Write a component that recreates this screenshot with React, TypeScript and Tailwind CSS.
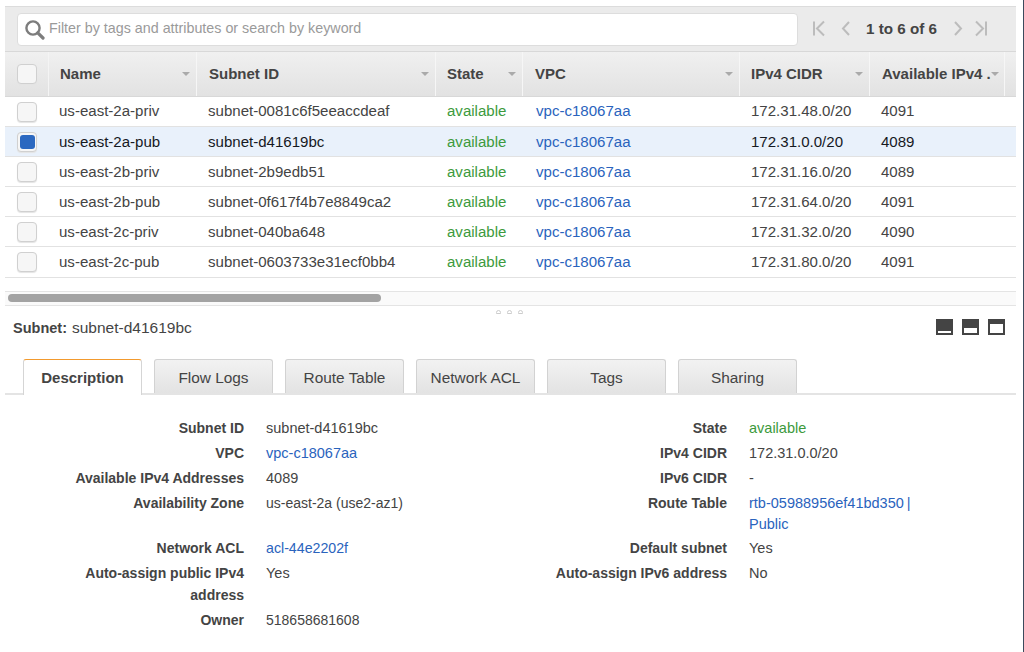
import React from "react";

const COLS = "grid grid-cols-[44px_148px_239px_87px_217px_130px_135px_11px]";
const rows = [
  ["us-east-2a-priv", "subnet-0081c6f5eeaccdeaf", "172.31.48.0/20", "4091"],
  ["us-east-2a-pub", "subnet-d41619bc", "172.31.0.0/20", "4089"],
  ["us-east-2b-priv", "subnet-2b9edb51", "172.31.16.0/20", "4089"],
  ["us-east-2b-pub", "subnet-0f617f4b7e8849ca2", "172.31.64.0/20", "4091"],
  ["us-east-2c-priv", "subnet-040ba648", "172.31.32.0/20", "4090"],
  ["us-east-2c-pub", "subnet-0603733e31ecf0bb4", "172.31.80.0/20", "4091"],
];
const headers = [
  ["Name", "pl-[11px]"],
  ["Subnet ID", "pl-[12px]"],
  ["State", "pl-[11px]"],
  ["VPC", "pl-[12px]"],
  ["IPv4 CIDR", "pl-[11px]"],
  ["Available IPv4 .", "pl-[12px]"],
];
const tabs = ["Description", "Flow Logs", "Route Table", "Network ACL", "Tags", "Sharing"];

function PagerIcon({ d, className }: { d: string; className: string }) {
  return (
    <svg width="14" height="18" viewBox="0 0 14 18" className={className} fill="none" stroke="#bcbcbc" strokeWidth="2">
      <path d={d} />
    </svg>
  );
}

function Check({ on }: { on?: boolean }) {
  return (
    <div className="flex h-[20px] w-[20px] items-center justify-center rounded-[4px] border border-[#d0d0d0] bg-[#f6f6f6] shadow-[0_1px_1px_#e4e4e4]">
      {on && <div className="h-[14px] w-[15px] rounded-[3px] bg-[#2b68c0]" />}
    </div>
  );
}

function DockIcon({ top, bottom }: { top: string; bottom: string }) {
  return (
    <div className={`flex h-[16px] w-[17px] flex-col bg-[#444] p-[2px] ${top}`}>
      <div className={`mt-auto w-full bg-white ${bottom}`} />
    </div>
  );
}

function Detail({ label, children }: { label: React.ReactNode; children: React.ReactNode }) {
  return (
    <div className="flex gap-[22px] py-[1.75px] leading-[21.5px]">
      <div className="w-[180px] shrink-0 text-right text-[14px] font-bold text-[#444]">{label}</div>
      <div className="min-w-0 flex-1 text-[#444]">{children}</div>
    </div>
  );
}

const Link = ({ children }: { children: React.ReactNode }) => <span className="text-[#2a63bd]">{children}</span>;

export default function App() {
  return (
    <div className="relative h-[652px] w-[1024px] overflow-hidden bg-white pl-[5px] pr-[8px] pt-[6px] [font-family:Liberation_Sans,Arial,sans-serif] text-[#444]">
      <div className="absolute bottom-0 right-0 top-0 w-[1px] bg-[#3b4a5c]" />

      {/* toolbar */}
      <div className="flex h-[45px] items-center border-t border-[#dcdcdc] bg-[#ebebeb] pl-[12px]">
        <div className="flex h-[33px] w-[781px] items-center rounded-[4px] border border-[#dddddd] bg-white pl-[6px]">
          <svg width="21" height="21" viewBox="0 0 21 21" fill="none" className="shrink-0">
            <circle cx="9" cy="9" r="6.6" stroke="#7d7d7d" strokeWidth="2.4" />
            <path d="M13.8 13.8 L19 19" stroke="#7d7d7d" strokeWidth="3.2" strokeLinecap="round" />
          </svg>
          <span className="ml-[4px] text-[14.3px] text-[#9a9a9a]">Filter by tags and attributes or search by keyword</span>
        </div>
        <div className="ml-[14px] flex items-center">
          <PagerIcon d="M2 1.5 V15.5 M12 1.5 L5 8.5 L12 15.5" className="" />
          <PagerIcon d="M10 2 L4 8.5 L10 15" className="ml-[13px]" />
          <span className="ml-[13px] text-[15.2px] font-bold text-[#444]">1 to 6 of 6</span>
          <PagerIcon d="M4 2 L10 8.5 L4 15" className="ml-[14px]" />
          <PagerIcon d="M2 1.5 L9 8.5 L2 15.5 M12 1.5 V15.5" className="ml-[9px]" />
        </div>
      </div>

      {/* header */}
      <div className={`${COLS} h-[46px] border-y border-[#d8d8d8] bg-gradient-to-b from-[#f0f0f0] to-[#e2e2e2]`}>
        <div className="flex items-center border-r border-[#f4f4f4] pl-[12px]">
          <Check />
        </div>
        {headers.map(([h, pad]) => (
          <div key={h} className={`flex items-center justify-between border-r border-[#f6f6f6] ${pad} pr-[6px] text-[15px] font-bold text-[#444]`}>
            <span className="whitespace-nowrap">{h}</span>
            <span className="h-0 w-0 shrink-0 border-x-[4px] border-t-[4px] border-x-transparent border-t-[#aaa]" />
          </div>
        ))}
        <div />
      </div>

      {/* rows */}
      {rows.map((r, i) => {
        const sel = i === 1;
        const c = sel ? "text-[#16191f]" : "text-[#444]";
        return (
          <div key={r[0]} className={`${COLS} h-[30.1px] items-center border-b border-[#e2e2e2] text-[15.05px] ${sel ? "bg-[#e9f1fb]" : "bg-white"}`}>
            <div className="pl-[12px]"><Check on={sel} /></div>
            <div className={`pl-[10px] pt-[0.4px] ${c}`}>{r[0]}</div>
            <div className={`pl-[11px] pt-[0.4px] ${c}`}>{r[1]}</div>
            <div className="pl-[11px] pt-[0.4px] text-[#3c9a3c]">available</div>
            <div className="pl-[13px] pt-[0.4px]"><Link>vpc-c18067aa</Link></div>
            <div className={`pl-[11px] pt-[0.4px] ${c}`}>{r[2]}</div>
            <div className={`pl-[11px] pt-[0.4px] ${c}`}>{r[3]}</div>
            <div />
          </div>
        );
      })}

      {/* scrollbar */}
      <div className="mt-[13px] flex h-[15px] items-center border-y border-[#e4e4e4] bg-[#fafafa] pl-[3px]">
        <div className="h-[8px] w-[373px] rounded-full bg-[#a3a3a3]" />
      </div>

      {/* resize handle */}
      <div className="flex h-[12px] items-center justify-center gap-[6px] pr-[3px]">
        <span className="h-[4px] w-[5px] rounded-t-full border border-[#ccc]" />
        <span className="h-[4px] w-[5px] rounded-t-full border border-[#ccc]" />
        <span className="h-[4px] w-[5px] rounded-t-full border border-[#ccc]" />
      </div>

      {/* panel title */}
      <div className="flex h-[20px] items-center justify-between pl-[8px] pr-[11px] text-[14.5px]">
        <div><span className="font-bold">Subnet:</span> <span className="ml-[1px] text-[15.5px]">subnet-d41619bc</span></div>
        <div className="-mt-[2px] flex gap-[9px]">
          <DockIcon top="" bottom="h-[2px]" />
          <DockIcon top="" bottom="h-[5px]" />
          <DockIcon top="pt-[4px]" bottom="h-[9px]" />
        </div>
      </div>

      {/* tabs */}
      <div className="mt-[21px] flex h-[36px] gap-[12px] border-b-2 border-[#e4e4e4] pl-[18px]">
        {tabs.map((t, i) =>
          i === 0 ? (
            <div key={t} className="-mb-[2px] flex h-[36px] w-[119px] items-center justify-center rounded-t-[3px] border-x border-t border-x-[#d5d5d5] border-t-[#f29a2e] bg-white pt-[2px] text-[15px] font-bold text-[#444]">
              {t}
            </div>
          ) : (
            <div key={t} className="flex h-[34px] w-[119px] items-center justify-center rounded-t-[3px] border-x border-t border-[#d2d2d2] bg-gradient-to-b from-[#f2f2f2] to-[#e3e3e3] pt-[2px] text-[15.4px] text-[#444]">
              {t}
            </div>
          )
        )}
      </div>

      {/* details */}
      <div className="flex pl-[59px] pt-[22px] text-[14.5px]">
        <div className="w-[483px] shrink-0">
          <Detail label="Subnet ID">subnet-d41619bc</Detail>
          <Detail label="VPC"><Link>vpc-c18067aa</Link></Detail>
          <Detail label="Available IPv4 Addresses">4089</Detail>
          <Detail label="Availability Zone"><span className="text-[14px]">us-east-2a (use2-az1)</span></Detail>
          <div className="h-[20px]" />
          <Detail label="Network ACL"><span className="text-[14.2px]"><Link>acl-44e2202f</Link></span></Detail>
          <Detail label="Auto-assign public IPv4 address">Yes</Detail>
          <Detail label="Owner"><span className="text-[14px]">518658681608</span></Detail>
        </div>
        <div className="w-[380px] shrink-0">
          <Detail label="State"><span className="text-[#3c9a3c]">available</span></Detail>
          <Detail label="IPv4 CIDR">172.31.0.0/20</Detail>
          <Detail label="IPv6 CIDR">-</Detail>
          <Detail label="Route Table">
            <div className="-mb-[1px] leading-[21px] [word-spacing:-1px]"><Link>rtb-05988956ef41bd350 | Public</Link></div>
          </Detail>
          <Detail label="Default subnet">Yes</Detail>
          <Detail label="Auto-assign IPv6 address">No</Detail>
        </div>
      </div>
    </div>
  );
}
